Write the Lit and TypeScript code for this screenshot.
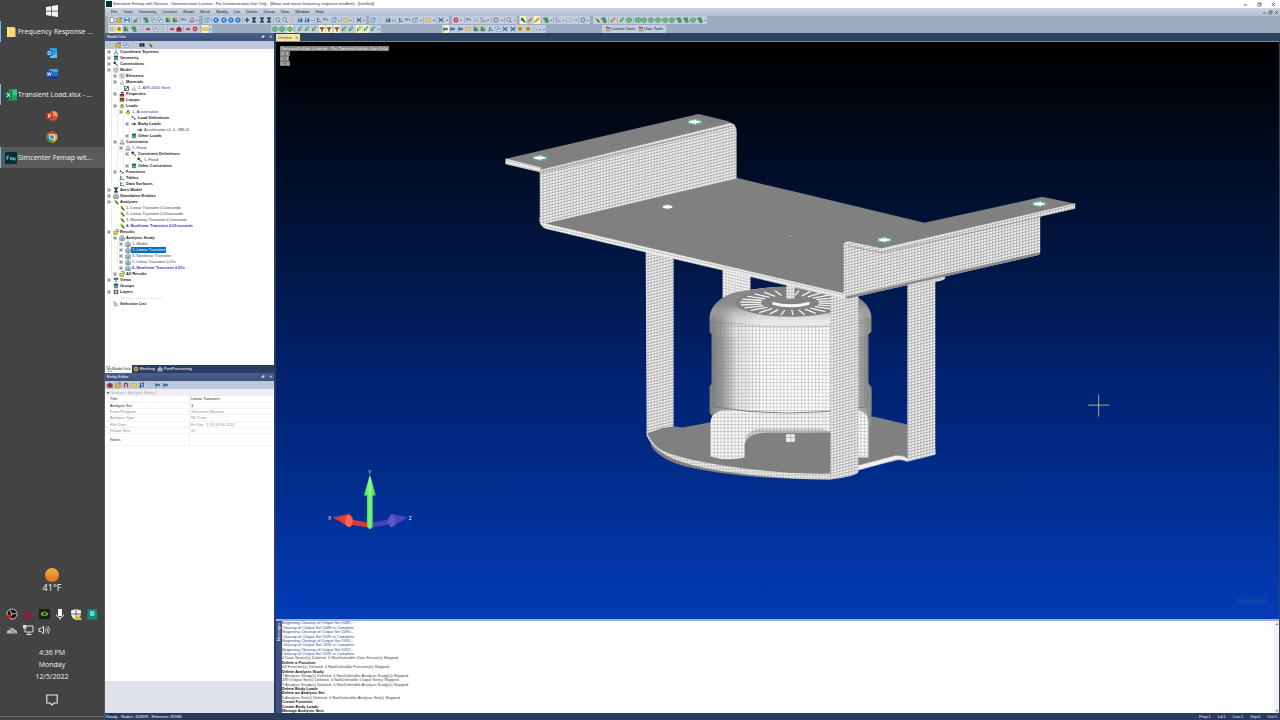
import { LitElement, html, css, svg, nothing } from "lit";
import { customElement, property } from "lit/decorators.js";
import { classMap } from "lit/directives/class-map.js";

/* ---------- small glyph library, 8x8 box ---------- */
const glyphs: Record<string, any> = {
  page: svg`<path d="M1.5.5h3.5l1.5 1.500v5.500h-5z" fill="#fff" stroke="#556" stroke-width=".8"/>`,
  open: svg`<path d="M.5 7V2h2.500l1 1h3v4z" fill="#e8b93a" stroke="#8a6a1a" stroke-width=".6"/><path d="M4 1h3v2" stroke="#357" fill="none"/>`,
  save: svg`<path d="M.5.5h7v7h-7z" fill="#2f7fae"/><path d="M2 .5h4v2.500H2zM2 5h4v2.500H2z" fill="#e8f2fa"/>`,
  brush: svg`<path d="M1 7l2-3 2 2zM4 4l3-3" fill="#c9c02a" stroke="#5c8a2a" stroke-width="1.400"/>`,
  greenBox: svg`<path d="M1 1h5v3H1zM3 4h4v3.500H3z" fill="#4fa060" stroke="#3c7b54" stroke-width=".6"/>`,
  copy: svg`<path d="M1 .8h4v3.500H1zM3 3.500h4v4H3z" fill="#eef3fa" stroke="#5c7494" stroke-width=".7"/>`,
  grid: svg`<path d="M1 1h6v6H1zM1 3h6M1 5h6M3 1v6M5 1v6" fill="#f0f3f7" stroke="#8d97a5" stroke-width=".6"/>`,
  color: svg`<path d="M1 1h3v3H1z" fill="#3b8f4d"/><path d="M4 1h3v3H4z" fill="#d9a62b"/><path d="M1 4h3v3H1z" fill="#3a70a8"/><path d="M4 4h3v3H4z" fill="#48a060"/>`,
  undo: svg`<path d="M1.500 3.500C3 1.500 6.500 2 6.500 5.500M1 1.500v2.500h2.500" fill="none" stroke="#465a7c"/>`,
  print: svg`<path d="M1 3h6v3H1zM2.500 1h3v2M2.500 5h3v2h-3z" fill="#dde" stroke="#556" stroke-width=".6"/>`,
  cube: svg`<path d="M1 3l2-2h4v4L5 7H1zM1 3h4v4M5 3l2-2" fill="#c5d7ea" stroke="#3c7dac" stroke-width=".7"/>`,
  nav: svg`<circle cx="4" cy="4" r="3.500" fill="#1e7bd0"/><path d="M4.800 2.200L3 4l1.800 1.800" stroke="#fff" fill="none" stroke-width="1.200"/>`,
  plus: svg`<path d="M4 .8v6.400M.8 4h6.400" stroke="#18324e" stroke-width="1.400"/>`,
  hour: svg`<path d="M1.500 1h5L4.500 4l2 3h-5l2-3z" fill="#1b4d7c" stroke="#173858" stroke-width=".8"/>`,
  lens: svg`<circle cx="3.400" cy="3.400" r="2.300" fill="#dfeaf5" stroke="#555f70"/><path d="M5 5l2.300 2.300" stroke="#555f70" stroke-width="1.200"/>`,
  ghost: svg`<path d="M1.500 2h4.500v4.500H1.500z" fill="none" stroke="#a3abba" stroke-width=".8"/>`,
  blueBar: svg`<path d="M1 7V4l2-2v5M4 7V3l3-2v6z" fill="#2c6fae"/><path d="M1 1h3" stroke="#6a6"/>`,
  axis: svg`<path d="M2 1v5h5M2 6L.8 7.500M2 3h3" stroke="#34536f" fill="none" stroke-width=".9"/>`,
  ring: svg`<circle cx="4" cy="4" r="2.700" fill="none" stroke="#5b6c80" stroke-width="1.100"/>`,
  yellow: svg`<path d="M.8 2h6.400v4H.8z" fill="#efd05a" stroke="#b09a50" stroke-width=".6"/>`,
  cross: svg`<path d="M1 1l6 6M7 1L1 7" stroke="#2a6ba5" stroke-width="1.400"/><path d="M1 4h6" stroke="#456"/>`,
  stop: svg`<circle cx="4" cy="4" r="3.300" fill="#c7393c"/><path d="M2.500 4h3" stroke="#fff" stroke-width="1.200"/>`,
  red: svg`<path d="M1 3h3V1.500L7.200 4 4 6.500V5H1z" fill="#b9393a"/>`,
  redBox: svg`<path d="M1 3h6v4H1zM2.800 3V1.500h2.400V3" fill="#b03034" stroke="#6d1f24" stroke-width=".7"/>`,
  select: svg`<path d="M1 1l4.500 3L3.500 5 2.500 7z" fill="#fff" stroke="#47536a" stroke-width=".7"/><path d="M5 6h2.500" stroke="#b64"/>`,
  pick: svg`<circle cx="3" cy="3" r="2.200" fill="#3f9a4a"/><path d="M3.500 4l3.500 3" stroke="#1d3a26" stroke-width="1.500"/>`,
  pencil: svg`<path d="M1 7l.8-2.200L5.600 1 7 2.400 3.200 6.200z" fill="#e2a338" stroke="#8f5d20" stroke-width=".6"/>`,
  mesh: svg`<path d="M.8 2.500L4 .8l3.200 1.700v3.300L4 7.400.8 5.800zM4 4v3.400M.8 2.500L4 4l3.200-1.500" fill="#8ecb98" stroke="#2b8c43" stroke-width=".8"/>`,
  sprout: svg`<path d="M2 7V3.500L5.500 1M2 5h3.500" stroke="#3f944c" fill="none" stroke-width="1.300"/><circle cx="5.800" cy="2" r="1.400" fill="#5db05f"/>`,
  tool: svg`<path d="M1 1.500h6v2H5v3.800H3V3.500H1z" fill="#8a4b20"/>`,
  gold: svg`<circle cx="4" cy="4" r="3.200" fill="#d9a92c"/><circle cx="4" cy="4" r="1.300" fill="#4c7b3a"/>`,
  flag: svg`<path d="M1 1v6.500M1 3h5v2H1z" fill="#2f78b8" stroke="#2b6090" stroke-width=".8"/>`,
  people: svg`<circle cx="2.500" cy="2.300" r="1.500" fill="#c23a35"/><circle cx="5.500" cy="2.800" r="1.400" fill="#3e72b0"/><path d="M.5 7c0-3 4-3 4 0zM4 7c0-2.500 3.500-2.500 3.500 0z" fill="#d08a20"/>`,
  triad: svg`<path d="M4 1v3.500L1 7M4 4.500L7 7" stroke="#3b8058" fill="none" stroke-width="1.300"/>`,
  solid: svg`<path d="M1.200 1h5.600v6H1.200z" fill="#44a29a"/><path d="M1.200 1h5.600v2H1.200z" fill="#27555a"/>`,
  link: svg`<circle cx="2.200" cy="2.400" r="1.700" fill="#333"/><path d="M2 2.500L6.500 6.500" stroke="#333" stroke-width="1.300"/>`,
  flask: svg`<path d="M4 1v2.500M4 3.500L6.800 6.800H1.200z" fill="#f0f3f7" stroke="#8d98a8" stroke-width=".9"/>`,
  prop: svg`<path d="M3 1h3v2.500H3z" fill="#24324c"/><path d="M1 4h6v3.400H1z" fill="#b2263c"/>`,
  layup: svg`<path d="M1 1h6v2H1z" fill="#8a2b2b"/><path d="M1 3h6v2H1z" fill="#222"/><path d="M1 5h6v2H1z" fill="#c8a13a"/>`,
  load: svg`<path d="M4 .5l2.800 4.500H1.200z" fill="#2e8a46"/><path d="M1 5l3-2 3 2-3 2.500z" fill="#e5ca3c" stroke="#6b6a20" stroke-width=".5"/>`,
  loadDef: svg`<path d="M1 1.500h2v2H1zM4 4h2v2H4z" fill="#34516f"/><path d="M3 3l2 2" stroke="#34516f"/>`,
  arrow: svg`<path d="M.5 4h4.500" stroke="#333" stroke-width="1.400"/><path d="M4 1.800L7.600 4 4 6.200z" fill="#2c7b43"/>`,
  fix: svg`<path d="M4 1L6.800 6H1.200zM.8 7h6.400" fill="#dceaf4" stroke="#5f7f96" stroke-width=".8"/>`,
  run: svg`<path d="M1 1h3l2 3-3 1z" fill="#d7c433"/><path d="M3.500 3l3.500 4" stroke="#305c34" stroke-width="1.600"/>`,
  result: svg`<path d="M.8 7.200V3h2v-2h2.400v2h2v4.200z" fill="#cfe0ea" stroke="#57768d" stroke-width=".8"/><path d="M3 7V4.500M5 7V4" stroke="#2c6b57"/>`,
  resultSet: svg`<path d="M1 3h5v4.300H1z" fill="#e6c83a" stroke="#6d6b23" stroke-width=".6"/><path d="M3 1h4v3" stroke="#4f8a3e" fill="none" stroke-width="1.200"/>`,
  views: svg`<path d="M1 1h6v2.800H1z" fill="#495f78"/><path d="M2.500 4.500h3v2.500h-3z" fill="#62aeb0"/>`,
  layers: svg`<path d="M1 1h2.500v6H1zM4.500 1H7v6H4.500z" fill="#4a5566"/><path d="M1 4h6" stroke="#fff" stroke-width=".7"/>`,
  find: svg`<path d="M1 2h2.300v4H1zM4.700 2H7v4H4.700zM3 3h2" fill="#222" stroke="#222" stroke-width=".6"/>`,
  magnet: svg`<path d="M2 7V3.500a2 2 0 014 0V7" fill="none" stroke="#c02d32" stroke-width="1.700"/>`,
  sort: svg`<path d="M2 1v6M5.500 7V1" stroke="#24406c" stroke-width="1.300"/><path d="M.5 5.500L2 7.500l1.500-2M4 2.500L5.500.5 7 2.500" fill="none" stroke="#24406c"/>`,
};

@customElement("fm-icon")
class FmIcon extends LitElement {
  @property() name = "page";
  static styles = css`
    :host { display: block; flex: none; width: 6px; height: 6px; }
    svg { display: block; width: 100%; height: 100%; }
  `;
  render() {
    return html`<svg viewBox="0 0 8 8" aria-hidden="true">${glyphs[this.name] ?? nothing}</svg>`;
  }
}

/* ---------- Windows task bar ---------- */
type Task = { id: string; label?: string; active?: boolean };
const tasks: Task[] = [
  { id: "start" },
  { id: "folder", label: "Frequency Response ..." },
  { id: "outlook" },
  { id: "word" },
  { id: "excel", label: "Transient Load.xlsx - ..." },
  { id: "ppt" },
  { id: "chrome" },
  { id: "femap", label: "Simcenter Femap wit...", active: true },
];
const taskArt: Record<string, any> = {
  start: svg`<path d="M0 2l5-.8v4.500H0zM5.700 1.100L12 0v5.700H5.700zM0 6.400h5v4.500L0 10.100zM5.700 6.400H12V12l-6.300-1z" fill="#f4f4f4"/>`,
  folder: svg`<path d="M2 1h7l1.500 1.500V11H2z" fill="#f5d778"/><path d="M2 1h1.500v10H2z" fill="#fbe9a9"/>`,
  outlook: svg`<path d="M4 1h7v9H4z" fill="#2a9be0"/><path d="M4 6l3.500 2L11 6v5H4z" fill="#5dc3f3"/><path d="M.5 3h6v6h-6z" fill="#0f62b2"/><circle cx="3.500" cy="6" r="1.600" fill="none" stroke="#fff" stroke-width=".9"/>`,
  word: svg`<path d="M3.500 1H12v3.500H3.500z" fill="#3fa2ec"/><path d="M3.500 4.500H12V8H3.500z" fill="#2a72d0"/><path d="M3.500 8H12v3H3.500z" fill="#123f92"/><path d="M0 3h6.500v6H0z" fill="#1a55b0"/><path d="M1.300 4.500l1 3 1-3 1 3 1-3" fill="none" stroke="#fff" stroke-width=".8"/>`,
  excel: svg`<path d="M3.500.5H12v11H3.500z" fill="#20a265"/><path d="M7.700.5H12v5.500H7.700z" fill="#35c481"/><path d="M0 2.500h7v7H0z" fill="#117842"/><path d="M2 4l3 4M5 4L2 8" stroke="#fff"/>`,
  ppt: svg`<circle cx="7" cy="6" r="5" fill="#d9512f"/><path d="M7 1a5 5 0 015 5H7z" fill="#f19174"/><path d="M0 3h6.500v6H0z" fill="#c03b20"/><path d="M2.500 8V4.500h1.300a1 1 0 010 2H2.500" fill="none" stroke="#fff" stroke-width=".8"/>`,
  chrome: svg`<circle cx="6" cy="6" r="5.500" fill="#e3b72d"/><path d="M6 6L1.200 3.300A5.500 5.500 0 006 11.500l2-3.600z" fill="#2f9a4c"/><path d="M1.200 3.300A5.500 5.500 0 0110.800 3.300H6z" fill="#d9412f"/><circle cx="6" cy="6" r="2.500" fill="#3f7de0" stroke="#fff" stroke-width=".9"/>`,
  femap: svg`<path d="M0 0h12v12H0z" fill="#04303a"/><path d="M2 8V4h2M2 6h1.500M5.500 8V5.500h1.500V8M8.500 5.500V8H10V5.500" stroke="#8fc6cf" fill="none" stroke-width=".9"/>`,
};

@customElement("task-bar")
class TaskBar extends LitElement {
  static styles = css`
    :host { display: flex; flex-direction: column; background: #434343; color: #f4f4f4;
      font: 8px/12px "Open Sans", sans-serif; border-right: 1px solid #55585c; overflow: hidden; }
    button { border: 0; padding: 0; margin: 0; background: none; color: inherit; font: inherit; }
    .task { display: flex; align-items: center; justify-content: center; height: 21px; }
    .task.open { justify-content: flex-start; gap: 1px; padding-left: 4px; border-left: 1px solid #76b9ed; font-size: 7px; white-space: nowrap; }
    .task.active { background: #5a5a5a; }
    .task svg { width: 12px; height: 12px; flex: none; }
    .weather { margin-top: auto; display: flex; flex-direction: column; align-items: center; font-size: 9px; }
    .sun { width: 14px; height: 14px; border-radius: 50%; background: linear-gradient(#f2b23c, #e2701e); }
    .tray { display: grid; grid-template-columns: repeat(6, 16px); justify-content: center; margin-top: 12px; }
    .tray button { display: grid; place-items: center; height: 16px; }
    .tray svg { display: block; width: 12px; height: 12px; }
    .clock { text-align: center; margin-top: 9px; font-size: 7px; }
    .notify { align-self: center; margin: 11px 0 10px; height: 12px; }
    .notify svg { display: block; width: 12px; height: 12px; }
    .peek { border-top: 1px solid #6c6c6c; height: 3px; flex: none; }
  `;
  render() {
    const tray: [string, any][] = [
      ["Recorder", svg`<circle cx="6" cy="6" r="5" fill="#111" stroke="#ddd" stroke-width=".9"/><path d="M6 6L4 2.500M6 6l4-.5M6 6l-2 3.500" stroke="#bbb" stroke-width="1.200"/><circle cx="3" cy="8.500" r="2.300" fill="#cf2020"/>`],
      ["Monitor", svg`<path d="M4.500 4L6 1.500 7.500 4l2 7h-7z" fill="#a01836"/>`],
      ["Graphics", svg`<path d="M1 1h11v10H1z" fill="#16240f"/><path d="M2.500 6c2-3.500 6-3 8 0-2 3-6 3-8 0z" fill="#76b02e"/><circle cx="6.500" cy="6" r="1.400" fill="#23380f"/>`],
      ["Microphone", svg`<path d="M4 1h4v7H4z" fill="#f4f4f4"/><path d="M2.500 6.500c0 4 7 4 7 0M6 9.500V12" stroke="#f4f4f4" fill="none"/>`],
      ["Security", svg`<path d="M6 1l5 1.500v3C11 9 8 11 6 12 4 11 1 9 1 5.500v-3z" fill="#f4f4f4"/><path d="M6 1v10M1 6h10" stroke="#444" stroke-width=".8"/><path d="M8.500 6l3.500 6H5.500z" fill="#f2b720"/>`],
      ["Vault", svg`<path d="M2 1h8.500l1 10.500H1z" fill="#148a77"/><path d="M4 3h4.500v5H4z" fill="#6fd0bd"/>`],
      ["Cloud", svg`<path d="M1 9.500C0 7 2 5.500 3.500 6 4 3 8 3 8.500 6 11 6 11.500 8 11 9.500z" fill="#b8b8b8"/><path d="M1.500 2.500l9 8" stroke="#666"/>`],
      ["Network", svg`<path d="M3 2h8v6H3zM7 8v2.500M4.500 10.500h5" fill="none" stroke="#ddd"/><path d="M1 1h3.500v3.500H1z" fill="#ddd"/>`],
      ["Volume", svg`<path d="M1 4.500h2L5.500 2v8L3 7.500H1z" fill="none" stroke="#eee" stroke-width=".9"/><path d="M7 4.500q1.200 1.500 0 3M8.500 3q2.500 3 0 6M10 2q3 4 0 8" fill="none" stroke="#ddd" stroke-width=".8"/>`],
    ];
    return html`
      ${tasks.map((t) => html`<button aria-label=${t.id} class="task ${classMap({ open: !!t.label, active: !!t.active })}">
        <svg viewBox="0 0 12 12">${taskArt[t.id]}</svg>${t.label ? html`<span>${t.label}</span>` : nothing}</button>`)}
      <div class="weather"><span class="sun"></span><span>41°F</span></div>
      <div class="tray">${tray.map(([n, art]) => html`<button aria-label=${n}><svg viewBox="0 0 12 12">${art}</svg></button>`)}</div>
      <div class="clock"><div>4:36 PM</div><div>Monday</div><div>12/5/2022</div></div>
      <button class="notify" aria-label="Notifications"><svg viewBox="0 0 12 12"><path d="M.8 1h10.400v8H8L6 11 4 9H.8z" fill="none" stroke="#eee" stroke-width="1.100"/></svg></button>
      <div class="peek"></div>`;
  }
}

/* ---------- tool bars ---------- */
type Group = { lead: number; width: number; items: string };
const rowOne: Group[] = [
  { lead: 3, width: 91, items: "page open save | brush | greenBox copy copy color color | undo print v" },
  { lead: 4, width: 163, items: "cube | nav nav nav nav | plus hour hour hour | lens lens ghost blueBar blueBar v | axis undo cube v | yellow v | cross v" },
  { lead: 3, width: 80, items: "cube ghost blueBar v | axis undo cube v | yellow v | cross v" },
  { lead: 3, width: 65, items: "stop v | undo v | select v | ring v | lens v" },
  { lead: 2, width: 71, items: "pick* pencil pencil* | greenBox v | select v | ghost v | ring v" },
  { lead: 3, width: 114, items: "run greenBox | pencil | sprout mesh | mesh mesh mesh mesh mesh mesh greenBox greenBox mesh greenBox v" },
];
const rowTwo: Group[] = [
  { lead: 3, width: 104, items: "grid* gold* color greenBox grid red copy grid | red redBox | red stop | yellow* v" },
  { lead: 59, width: 110, items: "mesh mesh mesh* | sprout sprout sprout tool* tool* tool* sprout sprout sprout* sprout* sprout v" },
  { lead: 61, width: 104, items: "flag* flag flag yellow color color axis copy cross cross gold gold ghost v v" },
];
const menus = ["File", "Tools", "Geometry", "Connect", "Model", "Mesh", "Modify", "List", "Delete", "Group", "View", "Window", "Help"];

@customElement("tool-row")
class ToolRow extends LitElement {
  @property({ attribute: false }) groups: Group[] = [];
  static styles = css`
    :host { display: flex; height: 8px; }
    .group { display: flex; align-items: center; justify-content: space-between; flex: none; height: 8px;
      background: #c3cde0; border-radius: 1px; box-sizing: border-box; padding: 0 1px; }
    button { border: 0; padding: 0; background: none; flex: none; display: grid; place-items: center; height: 8px; width: 6px; }
    .on { background: #fdf3c4; }
    .drop { width: 2px; }
    .drop::after { content: ""; border: 1px solid transparent; border-top-color: #333; border-bottom: 0; }
    .sep { width: 1px; height: 6px; background: #a5b0c6; }
  `;
  render() {
    return html`${this.groups.map((g) => html`<div class="group" role="toolbar" style="margin-left:${g.lead}px;width:${g.width}px">
      ${g.items.split(" ").map((t) => t === "|" ? html`<span class="sep"></span>`
        : t === "v" ? html`<button class="drop" aria-label="More"></button>`
        : html`<button aria-label=${t.replace("*", "")} class=${classMap({ on: t.endsWith("*") })}><fm-icon name=${t.replace("*", "")}></fm-icon></button>`)}
    </div>`)}<slot></slot>`;
  }
}

/* ---------- model tree ---------- */
type Node = [level: number, toggle: string, icon: string, text: string, look?: string];
const tree: Node[] = [
  [0, "+", "triad", "Coordinate Systems"],
  [0, "+", "solid", "Geometry"],
  [0, "+", "link", "Connections"],
  [0, "-", "grid", "Model"],
  [1, "+", "grid", "Elements"],
  [1, "-", "flask", "Materials"],
  [3, "x", "flask", "1..AISI 4340 Steel", "blue"],
  [1, "+", "prop", "Properties"],
  [1, "", "layup", "Layups"],
  [1, "-", "load", "Loads"],
  [2, "-", "load", "1..Acceleration", "blue"],
  [3, "", "loadDef", "Load Definitions"],
  [3, "-", "arrow", "Body Loads"],
  [4, "", "arrow", "Acceleration (0,-1,-386.4)", "thin"],
  [3, "+", "solid", "Other Loads"],
  [1, "-", "fix", "Constraints"],
  [2, "-", "fix", "1..Fixed", "blue"],
  [3, "-", "link", "Constraint Definitions"],
  [4, "", "link", "1..Fixed", "thin"],
  [3, "+", "solid", "Other Constraints"],
  [1, "+", "loadDef", "Functions"],
  [1, "", "axis", "Tables"],
  [1, "", "axis", "Data Surfaces"],
  [0, "+", "hour", "Aero Model"],
  [0, "+", "result", "Simulation Entities"],
  [0, "-", "run", "Analyses"],
  [1, "", "run", "1..Linear Transient 0.1seconds", "thin"],
  [1, "", "run", "2..Linear Transient 0.01seconds", "thin"],
  [1, "", "run", "3..Nonlinear Transient 0.1seconds", "thin"],
  [1, "", "run", "4..Nonlinear Transient 0.01seconds", "blue strong"],
  [0, "-", "resultSet", "Results"],
  [1, "-", "result", "Analysis Study"],
  [2, "+", "result", "1..Modal", "thin"],
  [2, "+", "result", "2..Linear Transient", "thin picked"],
  [2, "+", "result", "3..Nonlinear Transient", "thin"],
  [2, "+", "result", "5..Linear Transient 0.01s", "thin"],
  [2, "+", "result", "6..Nonlinear Transient 0.01s", "blue strong"],
  [1, "+", "resultSet", "All Results"],
  [0, "+", "views", "Views"],
  [0, "", "solid", "Groups"],
  [0, "+", "layers", "Layers"],
  [0, "", "", "--------------------------------", "rule"],
  [0, "", "select", "Selection List"],
];

@customElement("model-tree")
class ModelTree extends LitElement {
  static styles = css`
    :host { display: block; background: #fff; overflow: hidden; color: #1d1d22; font: bold 4px/6px "Liberation Sans", sans-serif; }
    .row { display: flex; align-items: center; height: 6px; white-space: nowrap; padding-left: 1px; }
    .indent { width: 6px; height: 6px; flex: none; border-right: 1px dotted #e4e4e4; box-sizing: border-box; }
    .toggle, .none { width: 4px; height: 4px; margin: 0 2px 0 1px; flex: none; box-sizing: border-box; }
    .toggle { padding: 0; border: 1px solid #d0d0d0; background: #999; }
    .check { appearance: none; width: 5px; height: 5px; margin: 0 2px 0 0; border: 1px solid #777; box-sizing: border-box; flex: none; background: linear-gradient(135deg, #fff 40%, #333 50%, #fff 60%); }
    .text { padding: 0 1px; }
    .blue { color: #3a30c4; font-weight: normal; }
    .thin { color: #404040; font-weight: normal; }
    .strong { font-weight: bold; }
    .rule { color: #999; font-weight: normal; }
    .picked { background: #0a6cc8; color: #fff; }
  `;
  render() {
    return html`<div role="tree">${tree.map(([level, toggle, icon, text, look], i) => html`
      <div class="row" role="treeitem">
        ${Array.from({ length: level }, () => html`<span class="indent"></span>`)}
        ${toggle === "x" ? html`<input id="c${i}" class="check" type="checkbox" checked />`
          : toggle ? html`<button class="toggle" aria-label=${toggle === "+" ? "Expand" : "Collapse"}></button>`
          : html`<span class="none"></span>`}
        <fm-icon name=${icon}></fm-icon>
        ${toggle === "x" ? html`<label for="c${i}" class="text ${look ?? ""}">${text}</label>` : html`<span class="text ${look ?? ""}">${text}</span>`}
      </div>`)}</div>`;
  }
}

/* ---------- 3D view ---------- */
const spokes = Array.from({ length: 26 }, (_, i) => {
  const a = (i / 26) * Math.PI * 2 + 0.06;
  return svg`<line x1=${790.5 + Math.cos(a) * 29} y1=${302 + Math.sin(a) * 7.5} x2=${790.5 + Math.cos(a) * 50} y2=${302 + Math.sin(a) * 12.500}/>`;
});
const hole = (x: number, y: number, fixed = true) => svg`<g>
  ${fixed ? svg`<ellipse cx=${x} cy=${y} rx="7.500" ry="2.600" fill="none" stroke="#58b39a" stroke-width="1.500" stroke-dasharray="4 2"/>` : nothing}
  <ellipse cx=${x} cy=${y} rx=${fixed ? 6 : 5} ry="1.600" fill="#fff"/>
  <path d="M${x - 2} ${y - 2}v4M${x + 1} ${y - 2.5}v5" stroke="#f4f8f6" stroke-width="1"/></g>`;

@customElement("model-view")
class ModelView extends LitElement {
  static styles = css`
    :host { display: block; position: relative; overflow: hidden; background: linear-gradient(#000 0%, #000308 6%, #001338 32%, #002069 55%, #012d90 78%, #033cb8 100%);
      color: #ddd; font: 4px/5px "DejaVu Sans", sans-serif; }
    .scene { display: block; width: 100%; height: 100%; }
    .labels { position: absolute; left: 4px; top: 4px; display: flex; flex-direction: column; align-items: flex-start; }
    .labels span { background: #7f7f7f; color: #f4f4f4; padding: 0 1px; }
    .brand { position: absolute; right: 12px; bottom: 13px; font: italic bold 8px/10px "Open Sans", sans-serif; color: #1a48a6; }
    text { font: 5px "Liberation Sans", sans-serif; fill: #e8e8e8; }
  `;
  render() {
    return html`
      <svg class="scene" viewBox="276 41 1004 578" preserveAspectRatio="xMinYMin slice" role="img" aria-label="Motor and mount">
        <defs>
          <pattern id="m" width="3" height="3" patternUnits="userSpaceOnUse"><rect width="3" height="3" fill="#f6f6f6"/><path d="M0 .5h3M.5 0v3" stroke="#b2b2b2" stroke-width=".8"/></pattern>
          <pattern id="up" width="3" height="3" patternUnits="userSpaceOnUse" patternTransform="skewY(-13.500)"><rect width="3" height="3" fill="#f5f5f5"/><path d="M0 .5h3M.5 0v3" stroke="#adadad" stroke-width=".8"/></pattern>
          <pattern id="dn" width="3" height="3" patternUnits="userSpaceOnUse" patternTransform="skewY(13)"><rect width="3" height="3" fill="#f8f8f8"/><path d="M0 .5h3M.5 0v3" stroke="#b8b8b8" stroke-width=".7"/></pattern>
          <pattern id="net" width="3.500" height="3.500" patternUnits="userSpaceOnUse"><path d="M0 .5h4M.5 0v4" stroke="#7a7a7a" stroke-opacity=".45" stroke-width=".7"/></pattern>
          <pattern id="fine" width="2" height="2" patternUnits="userSpaceOnUse"><path d="M0 .5h2M.5 0v2" stroke="#6a6a6a" stroke-opacity=".22" stroke-width=".7"/></pattern>
          <linearGradient id="body"><stop offset="0" stop-color="#7d7d7d"/><stop offset=".07" stop-color="#9c9c9c"/><stop offset=".16" stop-color="#e6e6e6"/><stop offset=".32" stop-color="#fff"/><stop offset=".78" stop-color="#fff"/><stop offset=".93" stop-color="#b0b0b0"/><stop offset="1" stop-color="#858585"/></linearGradient>
          <linearGradient id="dome" x2="0" y2="1"><stop offset="0" stop-color="#808080"/><stop offset=".4" stop-color="#8a8a8a" stop-opacity=".9"/><stop offset=".8" stop-color="#ddd" stop-opacity="0"/></linearGradient>
          <linearGradient id="green"><stop offset="0" stop-color="#45d455"/><stop offset=".5" stop-color="#8aff8c"/><stop offset="1" stop-color="#3fc04c"/></linearGradient>
        </defs>

        <!-- base plate -->
        <path d="M647 431l28-5 8 1 27-5 165-6 33 8v34l-48 10-29 11q-90 0-145-13-26-7-34-20z" fill="#808080"/>
        <path d="M647 431q6 16 20 21 30 11 96 18 34 4 68 3v6q-45 0-90-6-38-4-63-13-24-9-31-25z" fill="url(#m)"/>
        <path d="M858 465l38-10q8-1 12 3l28-8v4l-28 7q-6-2-10-2l-40 11z" fill="#f0f0f0" stroke="#999" stroke-width=".5"/>

        <!-- rear posts -->
        <path d="M723 265h28v45h-28z" fill="url(#dn)"/>
        <path d="M646 248h28v178l-12 2-15 5z" fill="url(#up)"/>
        <path d="M908 280h28v173l-28 8z" fill="url(#up)"/>

        <!-- motor -->
        <path d="M866 384l6 2v40l-4 2z" fill="#8b8b8b"/>
        <path d="M710 386q2-3 3-4h156q3 4 3 8v20l-6 10H716l-6-8z" fill="url(#body)"/>
        <path d="M712 325h157v79q-60 17-157 2z" fill="url(#body)"/>
        <path d="M710 331v-15q2-16 24-24 26-6 57-6t57 6q22 8 24 24v15q-4 4-6 4-76 8-150 0-5-1-6-4z" fill="url(#body)"/>
        <path d="M710 331v-15q2-16 24-24 26-6 57-6t57 6q22 8 24 24v15z" fill="url(#dome)"/>
        <path d="M712 318q78 14 157 0v86q-60 17-157 2z" fill="url(#net)"/>
        <path d="M711 318q8-14 30-17 50 14 100 0 22 3 30 17v4q-80 12-160 0z" fill="url(#fine)"/>
        <ellipse cx="791" cy="302" rx="55" ry="14" fill="#828282"/>
        <g stroke="#f4f4f4" stroke-width="1.300">${spokes}</g>
        <path d="M773 301q18 5 37 0v3q-18 5-37 0z" fill="#f6f6f6"/>
        <path d="M787 284h8v14h-8z" fill="url(#m)"/>
        <path d="M712 406q75 13 157 0" fill="none" stroke="#777" stroke-width="1"/>
        <path d="M711 456v-34q0-10 12-12 68 6 136 0 10 2 10 10v37h-13v-20q-6-6-20-5h-66q-22 0-25 12v13q-18 4-34-1z" fill="#f9f9f9"/>
        <path d="M711 456v-34q0-10 12-12 68 6 136 0 10 2 10 10v37h-13v-20q-6-6-20-5h-66q-22 0-25 12v13q-18 4-34-1z" fill="url(#net)"/>
        <path d="M745 446q0-20 22-18h50q10 0 14 4v5q-6-5-20-5h-41q-22 0-25 14z" fill="#777" fill-opacity=".35"/>
        <path d="M787 434h8v7h-8z" fill="#eee" stroke="#fff" stroke-width=".6"/>
        <path d="M787 437h8M791 434v7" stroke="#999" stroke-width=".6"/>

        <!-- front post -->
        <path d="M831 292h28v180q-4 4-28 7z" fill="url(#up)"/>

        <!-- deck -->
        <path d="M544 223L737 177l63 15 125 30 118-26 33 7-194 45-34-7-4 3v50z" fill="#808080"/>
        <path d="M540 217q1 5 6 6l299 70v5L547 228q-7-2-7-9z" fill="url(#dn)" stroke="#eee" stroke-width=".5"/>
        <!-- left bracket -->
        <path d="M506 158l193-45 29 7 8 4-196 46z" fill="#808080"/>
        <path d="M506 158l35 9-1 4-34-8z" fill="url(#dn)" stroke="#eee" stroke-width=".6"/>
        <path d="M540 169l190-47q7 1 7 8v48L545 223q-5-2-5-6z" fill="url(#up)"/>
        <path d="M540 169l189-47M541 172l192-47" stroke="#8c8c8c" stroke-width=".7"/>
        <!-- right bracket -->
        <ellipse cx="934" cy="277" rx="12" ry="4" fill="#d2d2d2"/>
        <path d="M844 245q1-4 5-4l33 7 194-45v5l-35 8v36q-1 3-5 3l-188 43-4-4z" fill="url(#up)"/>
        <path d="M844 245q1-4 5-4l33 7 194-45" fill="none" stroke="#eee" stroke-width=".8"/>
        <path d="M849 245l33 7 160-36" fill="none" stroke="#8b8b8b" stroke-width=".7"/>
        <path d="M846 296l191-44h4q-1 3-5 3l-188 43z" fill="#8a8a8a"/>

        ${hole(540, 157)}${hole(695, 121)}${hole(885, 239)}${hole(1040, 203)}${hole(668, 206, false)}
        <circle cx="791" cy="235.500" r=".7" fill="#ccc"/>

        <!-- axis triad -->
        <path d="M370 525l-22-4" stroke="#d43a3a" stroke-width="5"/>
        <path d="M333 517l17-4v14z" fill="#e03a35"/><ellipse cx="349" cy="520.500" rx="4" ry="6" fill="#ff6258"/>
        <path d="M370 525l22-4" stroke="#4343b4" stroke-width="5"/>
        <path d="M408 517l-17-4v14z" fill="#4545c2"/><ellipse cx="392" cy="520.500" rx="4" ry="6" fill="#5a58c8"/>
        <path d="M367 493h6v33l-3 3-3-3z" fill="url(#green)"/><path d="M370 474l6 21h-12z" fill="url(#green)"/>
        <text x="328" y="519">X</text><text x="368" y="473">Y</text><text x="409" y="519">Z</text>

        <path d="M1089 404.500h21M1099.500 394v22" stroke="#a8a98c" stroke-width="1"/>
      </svg>
      <div class="labels"><span>Demonstration License - For Demonstration Use Only</span><span>V: 1</span><span>L: 1</span><span>C: 1</span></div>
      <div class="brand">Siemens</div>`;
  }
}

/* ---------- application ---------- */
const log: [string, string][] = [
  ["b", "Beginning Cleanup of Output Set 1089..."], ["b", "Cleanup of Output Set 1089 is Complete."],
  ["b", "Beginning Cleanup of Output Set 1090..."], ["b", "Cleanup of Output Set 1090 is Complete."],
  ["b", "Beginning Cleanup of Output Set 1091..."], ["b", "Cleanup of Output Set 1091 is Complete."],
  ["b", "Beginning Cleanup of Output Set 1092..."], ["b", "Cleanup of Output Set 1092 is Complete."],
  ["g", "4 Data Series(s) Deleted. 0 NonDeletable Data Series(s) Skipped."],
  ["k", "Delete a Function"],
  ["g", "64 Function(s) Deleted. 0 NonDeletable Function(s) Skipped."],
  ["k", "Delete Analysis Study"],
  ["g", "7 Analysis Study(s) Deleted. 0 NonDeletable Analysis Study(s) Skipped."],
  ["g", "189 Output Set(s) Deleted. 0 NonDeletable Output Set(s) Skipped."],
  ["g", "7 Analysis Study(s) Deleted. 0 NonDeletable Analysis Study(s) Skipped."],
  ["k", "Delete Body Loads"], ["k", "Delete an Analysis Set"],
  ["g", "6 Analysis Set(s) Deleted. 0 NonDeletable Analysis Set(s) Skipped."],
  ["k", "Create Function"], ["k", "Create Body Loads"], ["k", "Manage Analysis Sets"],
];
const fields: [string, string, string][] = [
  ["Title", "Linear Transient", "dark"],
  ["Analysis Set", "3", "dark"],
  ["From Program", "Simcenter Nastran", ""],
  ["Analysis Type", "NL Trans", ""],
  ["File Date", "Fri Dec  2 15:10:06 2022", ""],
  ["Result Sets", "31", ""],
];

@customElement("app-root")
class AppRoot extends LitElement {
  static styles = css`
    :host { display: grid; grid-template-columns: 105px 1fr; height: 100vh; overflow: hidden; font: 4px/8px "Liberation Sans", sans-serif; color: #222; }
    button { border: 0; padding: 0; margin: 0; background: none; color: inherit; font: inherit; }
    .window { display: grid; grid-template-rows: 8px 8px 17px 1fr 7px; min-width: 0; background: #2b3c62; }
    .title { display: flex; align-items: center; gap: 1px; background: #fff; padding: 0 4px 0 1px; color: #333; white-space: nowrap; }
    .logo { width: 6px; height: 6px; background: #04303a; }
    .title h1 { font: inherit; margin: 0; flex: 1; }
    .controls { display: flex; gap: 9px; }
    .controls svg { display: block; width: 5px; height: 5px; }
    .menu { display: flex; align-items: center; background: linear-gradient(#ccd4e2, #b3bfd2); padding: 0 1px 0 6px; gap: 6px; }
    .menu .controls { margin-left: auto; gap: 1px; }
    .bars { display: flex; flex-direction: column; gap: 1px; background: #9dabc1; }
    .custom { display: flex; align-items: center; gap: 3px; background: #c3cde0; height: 8px; margin-left: 56px; padding: 0 3px; }
    .custom button { display: flex; align-items: center; gap: 0; height: 8px; }
    .work { display: grid; grid-template-columns: 169px minmax(0, 1fr); column-gap: 2px; min-height: 0; }
    .side { display: grid; grid-template-rows: minmax(0, 1fr) minmax(0, 1fr); min-height: 0; }
    .pane { display: flex; flex-direction: column; min-height: 0; }
    .head { display: flex; align-items: center; gap: 4px; height: 8px; flex: none; background: linear-gradient(#4a608a, #3b4f79); color: #fff; padding: 0 2px; }
    .head h2 { font: inherit; margin: 0; flex: 1; }
    .tools { display: flex; align-items: center; gap: 2px; height: 8px; flex: none; background: #bcc8dc; padding: 0 2px; }
    model-tree { flex: 1; min-height: 0; }
    .tabs { display: flex; align-items: stretch; height: 8px; flex: none; color: #fff; background: #2b3c62; }
    .tabs button { display: flex; align-items: center; padding: 0 1px; gap: 1px; }
    .tabs .current { background: #f8f9fb; color: #333; gap: 0; }
    .props { flex: 1; background: #fff; color: #8f8f8f; }
    .group { background: #edeff3; height: 7px; line-height: 7px; padding-left: 2px; color: #a8a8a8; }
    .group::before { content: "▾ "; color: #222; }
    table { border-collapse: collapse; width: 100%; table-layout: fixed; height: 50px; line-height: 5px; }
    th, td { padding: 0 0 0 5px; text-align: left; font-weight: normal; border-bottom: 1px solid #f3f3f3; height: 5px; }
    td { padding-left: 1px; white-space: pre; }
    th:first-child { border-right: 1px solid #eee; }
    .dark { color: #2a2a2a; }
    .notes th, .notes td { height: 10px; }
    .notes { color: #333; }
    .hint { height: 32px; flex: none; background: #dde2ea; }
    .stage { display: grid; grid-template-rows: 8px minmax(0, 1fr) 94px; min-width: 0; min-height: 0; padding-right: 1px; background: #2d4160; }
    .doc { align-self: end; justify-self: start; height: 7px; line-height: 7px; background: #f3e6a9; color: #5a4d20; padding: 0 2px; display: flex; gap: 3px; }
    model-view { border-top: 1px solid #8a8a8a; }
    .console { display: grid; grid-template-columns: 6px minmax(0, 1fr) 5px; border-top: 2px solid #9fb0d0; background: #fff; min-height: 0; }
    .grip { background: #3f5480; color: #fff; writing-mode: vertical-rl; transform: rotate(180deg); line-height: 6px; text-align: right; padding: 2px 0; }
    .log { display: flex; flex-direction: column; padding: 0; margin: 0; list-style: none; }
    .log li { flex: 1; line-height: 4px; white-space: nowrap; }
    .b { color: #34498c; } .g { color: #444; } .k { color: #111; font-weight: bold; }
    .scroll { background: #eef0f3; display: flex; flex-direction: column; justify-content: space-between; align-items: center; color: #555; line-height: 5px; }
    .status { display: flex; align-items: center; justify-content: space-between; color: #f0f3f8; padding: 0 3px 0 1px; line-height: 7px; background: #2b3a5f; white-space: pre; }
    .flags { display: flex; gap: 7px; }
  `;
  private controls() {
    return html`<div class="controls">
      <button aria-label="Minimize"><svg viewBox="0 0 6 6"><path d="M1 3.500h4" stroke="#555"/></svg></button>
      <button aria-label="Restore"><svg viewBox="0 0 6 6"><path d="M1 2h3v3H1zM2 2V1h3v3H4" fill="none" stroke="#555" stroke-width=".8"/></svg></button>
      <button aria-label="Close"><svg viewBox="0 0 6 6"><path d="M1 1l4 4M5 1L1 5" stroke="#444" stroke-width=".9"/></svg></button></div>`;
  }
  private head(name: string) {
    return html`<div class="head"><h2>${name}</h2><button aria-label="Pin">🖈</button><button aria-label="Close">✕</button></div>`;
  }
  private tools(list: string) {
    return html`<div class="tools" role="toolbar">${list.split(" ").map((n) => html`<button aria-label=${n}><fm-icon name=${n}></fm-icon></button>`)}</div>`;
  }
  render() {
    return html`
      <task-bar></task-bar>
      <div class="window">
        <header class="title"><span class="logo"></span><h1>Simcenter Femap with Nastran - Demonstration License - For Demonstration Use Only - [Motor and mount frequency response.modfem] - [Untitled]</h1>${this.controls()}</header>
        <nav class="menu">${menus.map((m) => html`<button>${m}</button>`)}${this.controls()}</nav>
        <div class="bars">
          <tool-row .groups=${rowOne}></tool-row>
          <tool-row .groups=${rowTwo}><div class="custom"><button><fm-icon name="people"></fm-icon>Custom Tools</button><button><fm-icon name="people"></fm-icon>User Tools</button></div></tool-row>
        </div>
        <div class="work">
          <aside class="side">
            <section class="pane">
              ${this.head("Model Info")}${this.tools("grid open copy grid find run")}
              <model-tree></model-tree>
              <div class="tabs"><button class="current"><fm-icon name="copy"></fm-icon>Model Info</button><button><fm-icon name="gold"></fm-icon>Meshing</button><button><fm-icon name="result"></fm-icon>PostProcessing</button></div>
            </section>
            <section class="pane">
              ${this.head("Entity Editor")}${this.tools("redBox open magnet yellow sort grid flag flag")}
              <div class="props">
                <div class="group">General - Analysis Study 2</div>
                <table><tbody>
                  ${fields.map(([k, v, c]) => html`<tr class=${c}><th scope="row">${k}</th><td>${v}</td></tr>`)}
                  <tr class="notes"><th scope="row">Notes</th><td></td></tr>
                </tbody></table>
              </div>
              <div class="hint"></div>
            </section>
          </aside>
          <main class="stage">
            <div class="doc"><span>Untitled</span><button aria-label="Close tab">✕</button></div>
            <model-view></model-view>
            <section class="console">
              <div class="grip">Messages</div>
              <ul class="log">${log.map(([c, t]) => html`<li class=${c}>${t}</li>`)}</ul>
              <div class="scroll"><span>▴</span><span>▾</span></div>
            </section>
          </main>
        </div>
        <footer class="status"><span>Ready - Nodes: 424899,  Elements: 82986</span><span class="flags"><span>Prop:1</span><span>Ld:1</span><span>Con:1</span><span>Grp:0</span><span>Out:1</span></span></footer>
      </div>`;
  }
}
